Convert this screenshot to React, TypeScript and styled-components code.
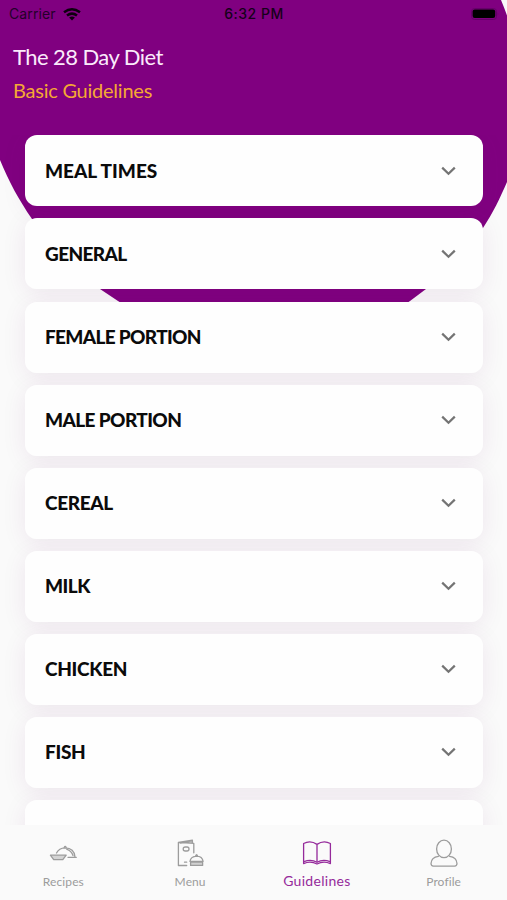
import React from "react";
import styled, { createGlobalStyle } from "styled-components";

const Global = createGlobalStyle`
  * { box-sizing: border-box; }
  html, body { margin: 0; padding: 0; background: #fafafa; overflow: hidden; }
`;

const Screen = styled.div`
  position: relative;
  isolation: isolate;
  display: flex;
  flex-direction: column;
  width: 507px;
  height: 900px;
  overflow: hidden;
  background: #fafafa;
  font-family: Lato, "Open Sans", sans-serif;
`;

const Backdrop = styled.svg`
  position: absolute;
  inset: 0;
  z-index: -2;
  width: 507px;
  height: 380px;
`;

const StatusBar = styled.div`
  display: grid;
  grid-template-columns: 1fr auto 1fr;
  align-items: center;
  flex: none;
  height: 28px;
  padding: 0 8px 0 9px;
  font-family: Inter, sans-serif;
  font-size: 14px;
  line-height: 28px;
  color: #16001a;
`;

const Carrier = styled.div`
  display: flex;
  align-items: center;
  gap: 7px;
  letter-spacing: 0.1px;
  color: #24002a;
`;

const Clock = styled.div`
  font-weight: 500;
  font-size: 14px;
  letter-spacing: 0.5px;
`;

const Battery = styled.svg`
  justify-self: end;
  display: block;
`;

const Header = styled.header`
  flex: none;
  height: 107.4px;
  padding: 13px 13px 0;
`;

const Title = styled.h1`
  margin: 0;
  font-size: 22px;
  font-weight: 400;
  line-height: 32px;
  letter-spacing: -0.57px;
  color: #fbeafb;
`;

const Subtitle = styled.h2`
  margin: 0;
  font-size: 20px;
  font-weight: 400;
  line-height: 34px;
  letter-spacing: -0.24px;
  color: #f5a834;
`;

const List = styled.main`
  display: flex;
  flex-direction: column;
  gap: 12.08px;
  flex: 1;
  min-height: 0;
  padding: 0 24px 0 25px;
  overflow: hidden;
`;

const Card = styled.section`
  position: relative;
  display: flex;
  align-items: center;
  justify-content: space-between;
  flex: none;
  height: 71px;
  padding: 0 27px 0 20px;
  border-radius: 12px;
  background: #fefefe;

  &::before {
    content: "";
    position: absolute;
    inset: 0;
    z-index: -1;
    border-radius: 12px;
    box-shadow: 0 4px 24px rgba(110, 20, 110, 0.085);
  }
`;

const CardTitle = styled.span<{ $spacing: number }>`
  font-size: 19px;
  font-weight: 900;
  line-height: 24px;
  letter-spacing: ${(p) => p.$spacing}px;
  white-space: nowrap;
  color: #0b0b0b;
`;

const TabBar = styled.nav`
  display: grid;
  grid-template-columns: repeat(4, 1fr);
  flex: none;
  height: 75px;
  background: #fafafa;
`;

const Tab = styled.div<{ $active?: boolean }>`
  display: flex;
  flex-direction: column;
  align-items: center;
  padding-top: 13px;
  color: ${(p) => (p.$active ? "#952a9b" : "#9c9c9c")};
`;

const TabLabel = styled.span<{ $active?: boolean }>`
  margin-top: ${(p) => (p.$active ? 3 : 4)}px;
  font-size: ${(p) => (p.$active ? 14 : 12)}px;
  line-height: 18px;
  letter-spacing: ${(p) => (p.$active ? 0.3 : 0.1)}px;
`;

const Icon = styled.svg`
  display: block;
  flex: none;
  width: 30px;
  height: 31px;
  fill: none;
  stroke: currentColor;
  stroke-width: 1.3;
  stroke-linecap: round;
  stroke-linejoin: round;
`;

const Chevron = () => (
  <svg width="15" height="10" viewBox="0 0 15 10" fill="none" stroke="#747474" strokeWidth="2.2">
    <path d="M1.2 1.6 7.5 7.8 13.8 1.6" />
  </svg>
);

const Wifi = () => (
  <svg width="18" height="13" viewBox="0 0 18 13" fill="none" stroke="#0c000e" strokeWidth="2.5">
    <path d="M1 4.2Q9 -1.6 17 4.2" />
    <path d="M4 7.6Q9 3.7 14 7.6" />
    <path d="M6.1 9.5Q9 7.4 11.9 9.5L9 12.6Z" fill="#0c000e" stroke="none" />
  </svg>
);

const RecipesIcon = () => (
  <Icon viewBox="0 0 30 31">
    <path d="M2.4 17.2H18.2L14.8 21.7H5.7Z" fill="#d4d4d4" />
    <path d="M8.5 15C10 12 13 9.9 17 9.8C23 10 26.5 13.2 26.9 18.6" />
    <path d="M18.7 11.2Q23.5 13 25 17.6M20 19.3H28.3M16.2 9.4Q17.2 7.2 18.2 9.4" />
  </Icon>
);

const MenuIcon = () => (
  <Icon viewBox="0 0 30 31">
    <path d="M11.7 27.5H3.4V4.3L17.4 2.2V5M3.4 4.3L18.8 5.4V14.8M5.4 5.2 17 3.6" />
    <rect x="8.2" y="9" width="5.8" height="4" rx="2" />
    <path d="M9.5 24.2H11.7M15 23.4Q15.6 18.4 21.6 18.1Q27.4 18.3 28.1 23.4ZM20.6 17.9Q21.6 15.6 22.6 17.9" />
    <path d="M15.6 24.2H27.6V27.4H15.6Z" fill="#d0d0d0" />
  </Icon>
);

const BookIcon = () => (
  <Icon viewBox="0 0 30 31">
    <path d="M15 6.4Q8.5 1.9 1.6 5.5V25.6Q8.5 22.5 15 26Q21.5 22.5 28.4 25.6V5.5Q21.5 1.9 15 6.4V23.8" />
    <path d="M2 23.6Q9 20.8 15 24.2Q21 20.8 28 23.6" />
  </Icon>
);

const ProfileIcon = () => (
  <Icon viewBox="0 0 30 31">
    <ellipse cx="15" cy="10.9" rx="7.4" ry="8.7" />
    <path d="M9.4 18.3C5 18.8 2.2 21.4 2 25.5Q2.1 28 4.3 28.1H25.7Q27.9 28 28 25.5C27.8 21.4 25 18.8 20.6 18.3" />
  </Icon>
);

const sections = [
  { title: "MEAL TIMES", spacing: 0 },
  { title: "GENERAL", spacing: -0.62 },
  { title: "FEMALE PORTION", spacing: -0.66 },
  { title: "MALE PORTION", spacing: -0.6 },
  { title: "CEREAL", spacing: -0.35 },
  { title: "MILK", spacing: -0.5 },
  { title: "CHICKEN", spacing: -0.3 },
  { title: "FISH", spacing: -0.3 },
  { title: "", spacing: 0 },
];

const tabs = [
  { label: "Recipes", icon: <RecipesIcon /> },
  { label: "Menu", icon: <MenuIcon /> },
  { label: "Guidelines", icon: <BookIcon />, active: true },
  { label: "Profile", icon: <ProfileIcon /> },
];

export default function App() {
  return (
    <>
      <Global />
      <Screen>
        <Backdrop viewBox="0 0 507 380">
          <path
            fill="#800080"
            d="M-10 0H501C526 58 527 127 507 182C500 198 493 213 483 228C467 253 449 272 426 289L410 301C330 360 205 360 118 301L100 289C70 267 50 245 32 219C19 200 9 182 0 160L-10 130Z"
          />
        </Backdrop>
        <StatusBar>
          <Carrier>
            Carrier
            <Wifi />
          </Carrier>
          <Clock>6:32 PM</Clock>
          <Battery width="28" height="12" viewBox="0 0 28 12">
            <rect x="0.5" y="0.5" width="25" height="11" rx="3" fill="none" stroke="#66006a" />
            <rect x="1.6" y="1.6" width="22.6" height="8.4" rx="2" fill="#000" />
            <path d="M26.7 4Q28 6 26.7 8Z" fill="#66006a" />
          </Battery>
        </StatusBar>
        <Header>
          <Title>The 28 Day Diet</Title>
          <Subtitle>Basic Guidelines</Subtitle>
        </Header>
        <List>
          {sections.map((s, i) => (
            <Card key={i}>
              <CardTitle $spacing={s.spacing}>{s.title}</CardTitle>
              {s.title && <Chevron />}
            </Card>
          ))}
        </List>
        <TabBar>
          {tabs.map((t) => (
            <Tab key={t.label} $active={t.active}>
              {t.icon}
              <TabLabel $active={t.active}>{t.label}</TabLabel>
            </Tab>
          ))}
        </TabBar>
      </Screen>
    </>
  );
}
